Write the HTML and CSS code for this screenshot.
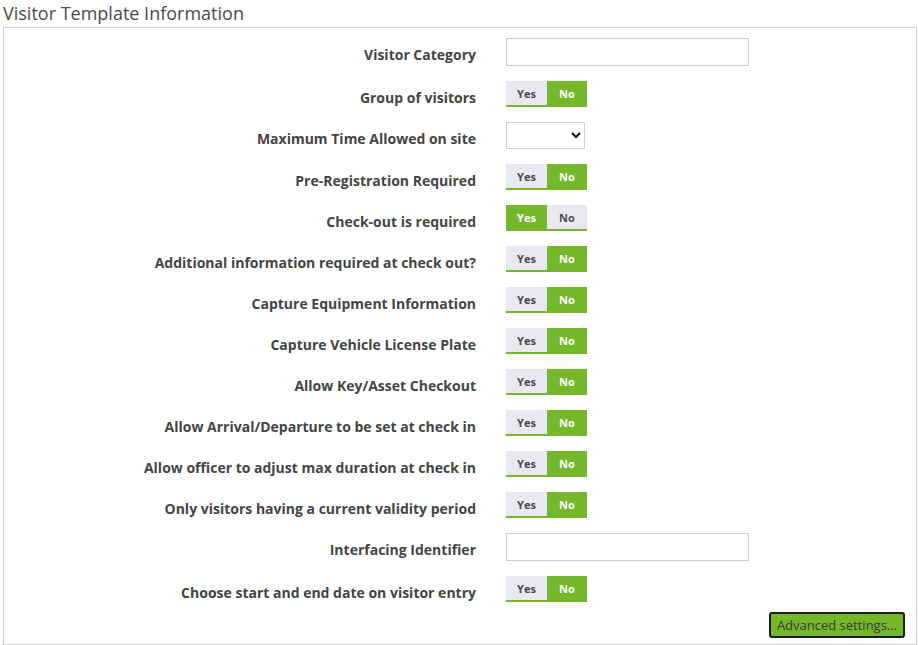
FILE: index.html
```html
<!DOCTYPE html>
<html lang="en">
<head>
<meta charset="UTF-8" />
<title>Visitor Template Information</title>
<link rel="stylesheet" href="styles.css">
</head>
<body>

<div class="page">
  <h2 class="legend">Visitor Template Information</h2>
  <div class="panel">

    <div class="form-row input-row">
      <label>Visitor Category</label>
      <div><input type="text" class="text-input"></div>
    </div>

    <div class="form-row">
      <label>Group of visitors</label>
      <div class="toggle"><span>Yes</span><span class="on">No</span></div>
    </div>

    <div class="form-row select-row">
      <label>Maximum Time Allowed on site</label>
      <div><select class="select-input"><option></option></select></div>
    </div>

    <div class="form-row">
      <label>Pre-Registration Required</label>
      <div class="toggle"><span>Yes</span><span class="on">No</span></div>
    </div>

    <div class="form-row">
      <label>Check-out is required</label>
      <div class="toggle"><span class="on">Yes</span><span>No</span></div>
    </div>

    <div class="form-row">
      <label>Additional information required at check out?</label>
      <div class="toggle"><span>Yes</span><span class="on">No</span></div>
    </div>

    <div class="form-row">
      <label>Capture Equipment Information</label>
      <div class="toggle"><span>Yes</span><span class="on">No</span></div>
    </div>

    <div class="form-row">
      <label>Capture Vehicle License Plate</label>
      <div class="toggle"><span>Yes</span><span class="on">No</span></div>
    </div>

    <div class="form-row">
      <label>Allow Key/Asset Checkout</label>
      <div class="toggle"><span>Yes</span><span class="on">No</span></div>
    </div>

    <div class="form-row">
      <label>Allow Arrival/Departure to be set at check in</label>
      <div class="toggle"><span>Yes</span><span class="on">No</span></div>
    </div>

    <div class="form-row">
      <label>Allow officer to adjust max duration at check in</label>
      <div class="toggle"><span>Yes</span><span class="on">No</span></div>
    </div>

    <div class="form-row">
      <label>Only visitors having a current validity period</label>
      <div class="toggle"><span>Yes</span><span class="on">No</span></div>
    </div>

    <div class="form-row input-row">
      <label>Interfacing Identifier</label>
      <div><input type="text" class="text-input"></div>
    </div>

    <div class="form-row last">
      <label>Choose start and end date on visitor entry</label>
      <div class="toggle"><span>Yes</span><span class="on">No</span></div>
    </div>

    <div class="actions">
      <button class="btn-advanced">Advanced settings...</button>
    </div>
  </div>
</div>

</body>
</html>
```

FILE: styles.css
```css
body {
  margin: 0;
  background: #fff;
  font-family: 'Open Sans', 'Noto Sans', sans-serif;
  color: #444;
}

.page {
  width: 914px;
  padding-left: 3px;
}

.legend {
  margin: 0;
  height: 27px;
  font-size: 18px;
  font-weight: 400;
  line-height: 27px;
  color: #4a4a4a;
  padding-bottom: 2px;
  box-sizing: border-box;
}

.panel {
  border: 1px solid #ccc;
  padding: 10px 0 5px 0;
  height: 618px;
  box-sizing: border-box;
}

.form-row {
  display: grid;
  grid-template-columns: 472px 1fr;
  column-gap: 30px;
  align-items: start;
  margin-bottom: 15px;
}

.form-row label {
  text-align: right;
  font-size: 14px;
  font-weight: 700;
  line-height: 19px;
  padding-top: 7px;
  color: #444;
}

.text-input {
  display: block;
  width: 243px;
  height: 28px;
  border: 1px solid #ccc;
  box-sizing: border-box;
  margin: 0;
  padding: 0 6px;
}

.select-input {
  display: block;
  width: 79px;
  height: 27px;
  border: 1px solid #ccc;
  background: #fff;
  box-sizing: border-box;
  margin: 0;
  border-radius: 0;
}

.toggle {
  display: flex;
  width: 81px;
  height: 26px;
  border-bottom: 2px solid #74b72a;
  box-sizing: border-box;
}

.toggle span {
  display: flex;
  align-items: center;
  justify-content: center;
  background: #e9e8f1;
  color: #4a4a4a;
  font-size: 11px;
  font-weight: 700;
  width: 41px;
}

.toggle span + span {
  width: 40px;
}

.toggle span.on {
  background: #74b72a;
  color: #fff;
}

.form-row.last {
  margin-bottom: 10px;
}

.actions {
  display: flex;
  justify-content: flex-end;
  padding-right: 11px;
}

.btn-advanced {
  background: #74b72a;
  border: 2px solid #1c1c1c;
  border-radius: 3px;
  height: 26px;
  width: 136px;
  padding: 0;
  font-family: 'Open Sans', 'Noto Sans', sans-serif;
  font-size: 13px;
  color: #3a3a3a;
  cursor: pointer;
}
```
